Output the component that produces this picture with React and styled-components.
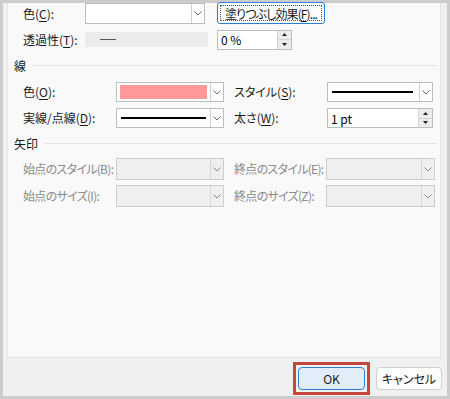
import React from "react";
import styled, { createGlobalStyle } from "styled-components";

const GlobalStyle = createGlobalStyle`
  html, body { margin: 0; padding: 0; background: #cccccc; }
  body {
    font-family: "Noto Sans CJK JP", "Noto Sans", sans-serif;
    font-size: 12px;
    color: #1a1a1a;
    font-feature-settings: "palt";
  }
`;

const Frame = styled.div`
  width: 450px;
  height: 399px;
  box-sizing: border-box;
  padding: 3px;
  background: #cccccc;
`;

const Dialog = styled.div`
  height: 100%;
  background: #f0f0f0;
  display: flex;
  flex-direction: column;
`;

const Panel = styled.div`
  flex: 1;
  margin: 0 6px 0 4px;
  background: #f9f9f9;
  border: 1px solid #e3e3e3;
  border-top: none;
  display: flex;
  flex-direction: column;
`;

const Footer = styled.div`
  height: 38px;
  box-sizing: border-box;
  padding: 9px 5px 0 0;
  display: flex;
  justify-content: flex-end;
  align-items: flex-start;
  gap: 11px;
`;

const Grid = styled.div`
  display: grid;
  grid-template-columns: ${(p) => p.$cols};
  grid-auto-rows: ${(p) => p.$row}px;
  row-gap: ${(p) => p.$gap}px;
  align-items: center;
  margin: ${(p) => p.$margin};
`;

const Label = styled.span`
  white-space: nowrap;
  color: ${(p) => (p.$disabled ? "#8a8a8a" : "#1a1a1a")};
  padding-left: ${(p) => p.$indent || 0}px;
  letter-spacing: ${(p) => (p.$tight ? "-0.7px" : "0")};
  line-height: 16px;
  position: relative;
  z-index: 1;
`;

const U = styled.span`
  text-decoration: underline;
  text-underline-offset: 2px;
`;

const Heading = styled.div`
  display: flex;
  align-items: center;
  gap: 6px;
  height: 16px;
  margin: ${(p) => p.$margin};
  color: #1a1a1a;
  &::after {
    content: "";
    flex: 1;
    height: 1px;
    background: #e2e2e2;
  }
`;

const Combo = styled.div`
  display: flex;
  box-sizing: border-box;
  width: ${(p) => p.$w}px;
  height: ${(p) => p.$h}px;
  border: 1px solid ${(p) => (p.$disabled ? "#cdcdcd" : "#bdbdbd")};
  background: ${(p) => (p.$disabled ? "#efefef" : "#ffffff")};
`;

const ComboBody = styled.div`
  flex: 1;
  display: flex;
  align-items: center;
  padding: 0 3px;
`;

const ArrowPart = styled.div`
  width: 12px;
  border-left: 1px solid ${(p) => (p.$disabled ? "#d6d6d6" : "#d0d0d0")};
  display: flex;
  align-items: center;
  justify-content: center;
  background: ${(p) => (p.$disabled ? "#efefef" : "#ffffff")};
`;

const Swatch = styled.div`
  flex: 1;
  height: 14px;
  background: #ff9999;
`;

const LineSample = styled.div`
  flex: 1;
  height: 2px;
  margin: 0 ${(p) => p.$inset || 1}px;
  background: #000;
`;

const Chevron = ({ disabled }) => (
  <svg width="8" height="5" viewBox="0 0 8 5">
    <path d="M0.5 0.5 L4 4 L7.5 0.5" fill="none" stroke={disabled ? "#8a8a8a" : "#6a6a6a"} strokeWidth="1" />
  </svg>
);

const Dropdown = ({ w, h = 20, disabled, children }) => (
  <Combo $w={w} $h={h} $disabled={disabled}>
    <ComboBody>{children}</ComboBody>
    <ArrowPart $disabled={disabled}>
      <Chevron disabled={disabled} />
    </ArrowPart>
  </Combo>
);

const SpinBox = styled.div`
  display: flex;
  box-sizing: border-box;
  width: ${(p) => p.$w}px;
  height: ${(p) => p.$h}px;
  border: 1px solid #bdbdbd;
  background: #fff;
`;

const SpinText = styled.div`
  flex: 1;
  display: flex;
  align-items: center;
  padding-left: 3px;
  color: #000;
`;

const SpinButtons = styled.div`
  width: 13px;
  display: flex;
  flex-direction: column;
  border-left: 1px solid #d4d4d4;
`;

const SpinBtn = styled.div`
  flex: 1;
  display: flex;
  align-items: center;
  justify-content: center;
  background: #ececec;
  & + & { border-top: 1px solid #d4d4d4; }
`;

const Tri = ({ up }) => (
  <svg width="5" height="3" viewBox="0 0 5 3">
    <path d={up ? "M0 3 L2.5 0 L5 3 Z" : "M0 0 L2.5 3 L5 0 Z"} fill="#222" />
  </svg>
);

const Spinner = ({ w, h = 20, value }) => (
  <SpinBox $w={w} $h={h}>
    <SpinText>{value}</SpinText>
    <SpinButtons>
      <SpinBtn><Tri up /></SpinBtn>
      <SpinBtn><Tri /></SpinBtn>
    </SpinButtons>
  </SpinBox>
);

const Slider = styled.div`
  width: 123px;
  height: 15px;
  background: #ececec;
  display: flex;
  align-items: center;
  padding-left: 15px;
  box-sizing: border-box;
  &::before {
    content: "";
    width: 16px;
    height: 1px;
    background: #555;
  }
`;

const FillButton = styled.button`
  position: relative;
  width: 108px;
  height: 22px;
  margin-top: -1px;
  padding: 0;
  border: 1px solid #2a7fd4;
  border-radius: 3px;
  background: #fdfdfd;
  font: inherit;
  letter-spacing: -0.9px;
  color: #1a1a1a;
  display: flex;
  align-items: center;
  justify-content: center;
  white-space: nowrap;
  &::after {
    content: "";
    position: absolute;
    inset: 2px;
    border: 1px dotted #555;
  }
`;

const Highlight = styled.span`
  display: inline-flex;
  margin: -5px;
  padding: 2px;
  border: 3px solid #c4473f;
`;

const DialogButton = styled.button`
  width: ${(p) => p.$w}px;
  height: 23px;
  box-sizing: border-box;
  border-radius: 4px;
  font: inherit;
  color: #1a1a1a;
  padding: 0;
  border: 1px solid ${(p) => (p.$primary ? "#2f7fd0" : "#d0d0d0")};
  background: ${(p) => (p.$primary ? "#e1eefa" : "#fdfdfd")};
`;

export default function App() {
  return (
    <>
      <GlobalStyle />
      <Frame>
        <Dialog>
          <Panel>
            <Grid $cols="62px 132px auto" $row={21} $gap={5} $margin="0 0 0 15px">
              <Label>色(<U>C</U>):</Label>
              <Dropdown w={120} h={21} />
              <FillButton>塗りつぶし効果(<U>F</U>)...</FillButton>
              <Label>透過性(<U>T</U>):</Label>
              <Slider />
              <Spinner w={75} h={20} value="0 %" />
            </Grid>

            <Heading $margin="7px 3px 0 6px">線</Heading>

            <Grid $cols="93px 108px 103px 106px" $row={20} $gap={6} $margin="9px 0 0 15px">
              <Label>色(<U>O</U>):</Label>
              <Dropdown w={108}>
                <Swatch />
              </Dropdown>
              <Label $indent={10}>スタイル(<U>S</U>):</Label>
              <Dropdown w={106}>
                <LineSample $inset={1} />
                <span style={{ width: 2 }} />
              </Dropdown>
              <Label>実線/点線(<U>D</U>):</Label>
              <Dropdown w={108}>
                <LineSample $inset={1} />
              </Dropdown>
              <Label $indent={10}>太さ(<U>W</U>):</Label>
              <Spinner w={106} value="1 pt" />
            </Grid>

            <Heading $margin="7px 3px 0 6px">矢印</Heading>

            <Grid $cols="93px 108px 102px 109px" $row={22} $gap={5} $margin="7px 0 0 15px">
              <Label $disabled $tight>始点のスタイル(B):</Label>
              <Dropdown w={108} h={22} disabled />
              <Label $disabled $tight $indent={10}>終点のスタイル(E):</Label>
              <Dropdown w={109} h={22} disabled />
              <Label $disabled $tight>始点のサイズ(I):</Label>
              <Dropdown w={108} h={22} disabled />
              <Label $disabled $tight $indent={10}>終点のサイズ(Z):</Label>
              <Dropdown w={109} h={22} disabled />
            </Grid>
          </Panel>
          <Footer>
            <Highlight>
              <DialogButton $w={67} $primary>OK</DialogButton>
            </Highlight>
            <DialogButton $w={66}>キャンセル</DialogButton>
          </Footer>
        </Dialog>
      </Frame>
    </>
  );
}
